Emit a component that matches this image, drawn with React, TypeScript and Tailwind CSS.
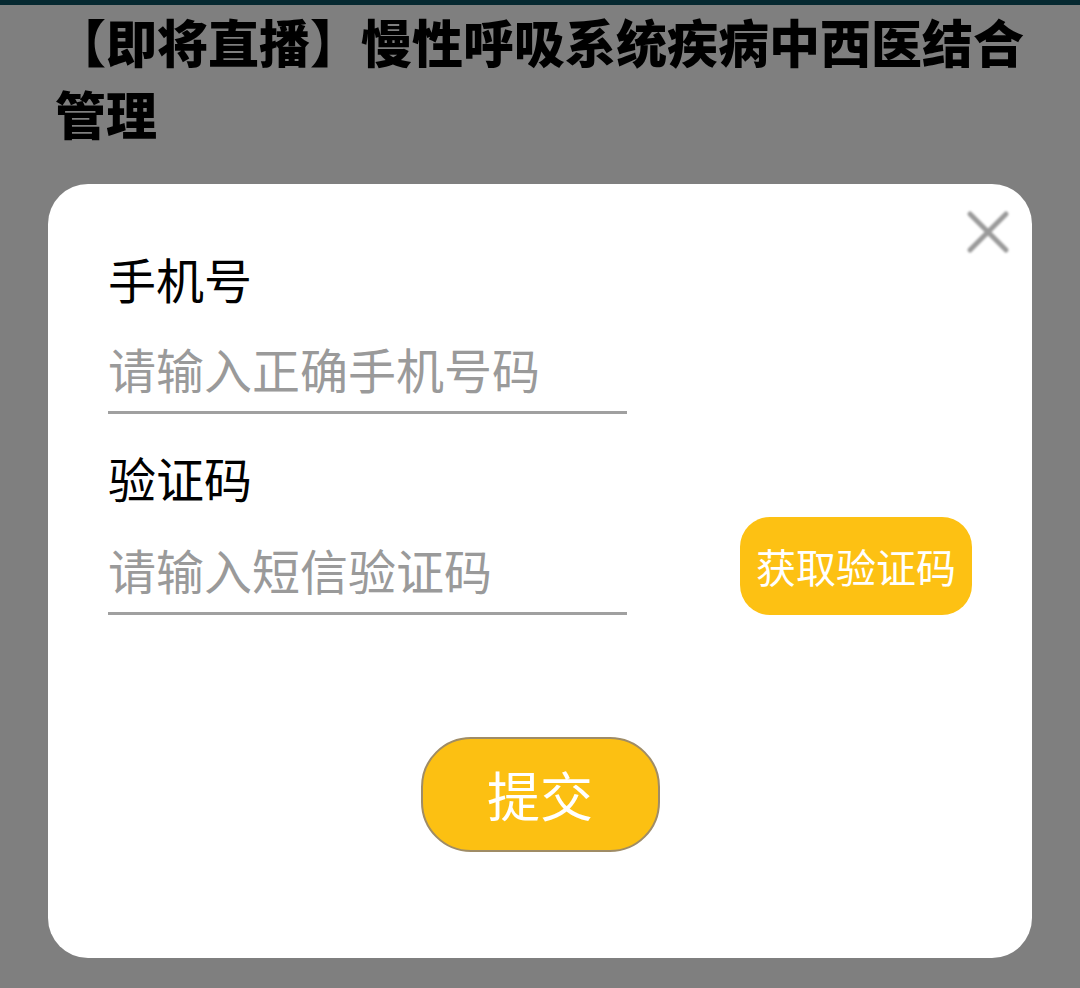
import { useState } from "react";

const cjk = { fontFamily: '"Noto Sans CJK SC", "Noto Sans", sans-serif' };

function CloseIcon() {
  return (
    <svg viewBox="0 0 44 44" className="h-[44px] w-[44px]" style={{ filter: "blur(0.8px)" }}>
      <path d="M4 4 L40 40 M40 4 L4 40" stroke="#9a9a9a" strokeWidth="5" strokeLinecap="round" />
    </svg>
  );
}

export default function App() {
  const [phone, setPhone] = useState("");
  const [code, setCode] = useState("");
  const [open, setOpen] = useState(true);

  return (
    <div className="relative min-h-[988px] w-[1080px] overflow-hidden bg-white" style={cjk}>
      <div className="h-[5px] bg-[#0c5262]" />
      <h1 className="pl-[55px] pr-[50px] text-[51px] font-black leading-[72px] text-black">
        【即将直播】慢性呼吸系统疾病中西医结合管理
      </h1>
      <p className="mt-[34px] px-[55px] text-[32px] leading-[48px] text-[#222]">
        Contents of the live broadcast will be updated soon.
      </p>

      {open ? (
        <div className="absolute inset-0 bg-black/50">
          <div className="relative mx-[48px] mt-[184px] h-[774px] rounded-[40px] bg-white px-[60px] pt-[70px]">
            <button
              type="button"
              onClick={() => setOpen(false)}
              className="absolute right-[22px] top-[26px]"
            >
              <CloseIcon />
            </button>

            <div className="text-[48px] leading-none text-black">手机号</div>
            <input
              value={phone}
              onChange={(e) => setPhone(e.target.value)}
              placeholder="请输入正确手机号码"
              className="mt-[42px] block h-[70px] w-[519px] border-b-[3px] border-[#a0a0a0] pb-[19px] text-[48px] leading-none text-black outline-none placeholder:text-[#9a9a9a]"
              style={cjk}
            />

            <div className="mt-[39px] text-[48px] leading-none text-black">验证码</div>
            <div className="flex items-end justify-between">
              <input
                value={code}
                onChange={(e) => setCode(e.target.value)}
                placeholder="请输入短信验证码"
                className="mt-[44px] block h-[70px] w-[519px] border-b-[3px] border-[#a0a0a0] pb-[19px] text-[48px] leading-none text-black outline-none placeholder:text-[#9a9a9a]"
                style={cjk}
              />
              <button
                type="button"
                className="h-[98px] w-[232px] rounded-[30px] bg-[#fdc113] text-[40px] text-white"
              >
                获取验证码
              </button>
            </div>

            <div className="mt-[122px] flex justify-center">
              <button
                type="button"
                className="h-[115px] w-[239px] rounded-[50px] border-2 border-[#9f8c66] bg-[#fcc012] text-[53px] text-white"
              >
                提交
              </button>
            </div>
          </div>
        </div>
      ) : null}
    </div>
  );
}
